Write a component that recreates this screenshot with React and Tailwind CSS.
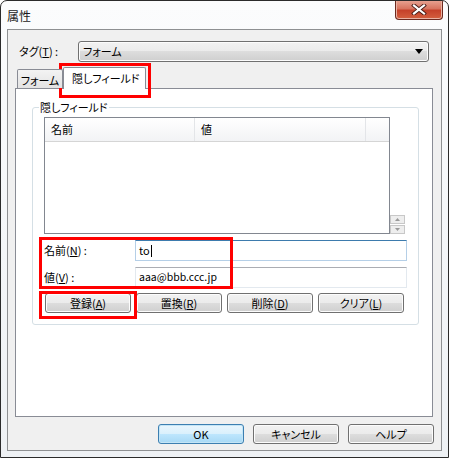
import React from 'react';

// win7 style push button
const Btn = ({ children, className = '', primary = false }) => (
	<div
		className={
			'flex items-center justify-center h-[20px] rounded-[3px] border whitespace-nowrap leading-none text-black ' +
			(primary
				? 'border-[#3c7fb1] bg-[linear-gradient(#eaf6fd_0%,#d9f0fc_50%,#bee6fd_50%,#a7d9f5_100%)] shadow-[inset_0_0_0_1px_#c4e5f6] '
				: 'border-[#707070] bg-[linear-gradient(#f2f2f2_0%,#ebebeb_50%,#dddddd_50%,#cfcfcf_100%)] shadow-[inset_0_0_0_1px_#fcfcfc] ') +
			className
		}
	>
		{children}
	</div>
);

const U = ({ children }) => <span className="underline underline-offset-1">{children}</span>;

const CloseButton = () => (
	<div className="ml-auto mr-[5px] -mt-[1px] flex h-[20px] w-[48px] items-center justify-center rounded-b-[4px] border border-t-0 border-[#6b2a20] bg-[linear-gradient(#e9a695_0%,#d77560_45%,#c5412a_55%,#d4603f_100%)] shadow-[inset_0_0_0_1px_#eab2a3]">
		<svg width="16" height="11" viewBox="0 0 16 11">
			<path d="M3 1.5 L13 9.5 M13 1.5 L3 9.5" stroke="#4a1c15" strokeWidth="4" strokeLinecap="square" />
			<path d="M3 1.5 L13 9.5 M13 1.5 L3 9.5" stroke="#ffffff" strokeWidth="2.2" strokeLinecap="square" />
		</svg>
	</div>
);

const App = () => {
	return (
		<div className="relative flex h-[458px] w-[449px] flex-col overflow-hidden rounded-t-[7px] border border-[#2b2b2b] bg-[linear-gradient(#fbfcfd,#eef1f4)] font-['Noto_Sans_CJK_JP',sans-serif] text-[11px] text-black [font-feature-settings:'palt']">
			{/* title bar */}
			<div className="flex h-[28px] shrink-0 items-start">
				<span className="pl-[6px] pt-[9px] text-[12px] leading-[12px] text-[#1a1a1a]">属性</span>
				<CloseButton />
			</div>

			{/* client area */}
			<div className="mx-[6px] mb-[6px] flex flex-1 flex-col border border-[#8e9092] bg-[#f0f0f0]">
				{/* tag row */}
				<div className="mt-[11px] flex h-[21px] items-center pl-[11px] pr-[12px]">
					<div className="w-[59px] whitespace-nowrap leading-none">
						タグ(<U>T</U>) :
					</div>
					<div className="flex h-[21px] flex-1 items-center rounded-[3px] border border-[#707070] bg-[linear-gradient(#f2f2f2_0%,#ebebeb_50%,#dddddd_50%,#cfcfcf_100%)] pl-[4px] pr-[5px] shadow-[inset_0_0_0_1px_#fcfcfc]">
						<span className="leading-none">フォーム</span>
						<svg className="ml-auto" width="8" height="5" viewBox="0 0 8 5">
							<path d="M0 0 H8 L4 5 Z" fill="#000" />
						</svg>
					</div>
				</div>

				{/* tabs */}
				<div className="relative z-10 ml-[7px] mt-[5px] flex h-[22px] items-end pl-[2px]">
					<div className="mb-[1px] flex h-[19px] w-[46px] items-center justify-center whitespace-nowrap rounded-t-[2px] border border-b-0 border-[#898c95] bg-[linear-gradient(#f3f3f3,#e3e3e3)] pt-[2px] leading-none">
						フォーム
					</div>
					<div className="flex h-[22px] w-[83px] items-center whitespace-nowrap rounded-t-[2px] border border-b-0 border-[#898c95] bg-white pl-[8px] leading-none">
						隠しフィールド
					</div>
				</div>

				{/* tab panel */}
				<div className="-mt-[1px] ml-[7px] mr-[8px] flex h-[329px] flex-col border border-[#898c95] bg-white">
					<div className="relative ml-[16px] mr-[13px] mt-[18px] h-[218px] rounded-[3px] border border-[#d5dfe5] pl-[11px] pt-[9px]">
						<span className="absolute -top-[8px] left-[6px] whitespace-nowrap bg-white px-[1px] leading-[14px]">隠しフィールド</span>

						{/* list view */}
						<div className="flex items-end">
							<div className="h-[117px] w-[346px] border border-[#828790] bg-white">
								<div className="flex h-[24px] border-b border-[#d5d5d5] bg-[linear-gradient(#ffffff,#f2f3f5)]">
									<div className="flex w-[150px] items-center border-r border-[#e3e5e8] pl-[6px] leading-none">名前</div>
									<div className="flex w-[171px] items-center border-r border-[#e3e5e8] pl-[6px] leading-none">値</div>
									<div className="flex-1" />
								</div>
							</div>
							<div className="flex w-[15px] flex-col gap-[1px]">
								<div className="flex h-[9px] items-center justify-center border border-[#c8c8c8] bg-[#eeeeee]">
									<svg width="5" height="3" viewBox="0 0 5 3"><path d="M0 3 L2.5 0 L5 3 Z" fill="#9a9a9a" /></svg>
								</div>
								<div className="flex h-[9px] items-center justify-center border border-[#c8c8c8] bg-[#eeeeee]">
									<svg width="5" height="3" viewBox="0 0 5 3"><path d="M0 0 L5 0 L2.5 3 Z" fill="#9a9a9a" /></svg>
								</div>
							</div>
						</div>

						{/* name / value */}
						<div className="mt-[6px] flex h-[21px] items-center">
							<div className="w-[91px] whitespace-nowrap leading-none">
								名前(<U>N</U>) :
							</div>
							<div className="flex h-[21px] w-[272px] items-center border border-[#b5cfe7] border-t-[#3d7bad] bg-white pl-[3px] leading-none">
								to
								<span className="ml-[1px] inline-block h-[12px] w-[1px] bg-black" />
							</div>
						</div>
						<div className="mt-[6px] flex h-[21px] items-center">
							<div className="w-[91px] whitespace-nowrap leading-none">
								値(<U>V</U>) :
							</div>
							<div className="flex h-[21px] w-[272px] items-center border border-[#e3e9ef] border-t-[#abadb3] bg-white pl-[3px] text-[10.5px] leading-none">
								aaa@bbb.ccc.jp
							</div>
						</div>

						{/* action buttons */}
						<div className="mt-[5px] flex gap-[5px] pl-[1px]">
							<Btn className="w-[86px]">
								登録(<U>A</U>)
							</Btn>
							<Btn className="w-[86px]">
								置換(<U>R</U>)
							</Btn>
							<Btn className="w-[86px]">
								削除(<U>D</U>)
							</Btn>
							<Btn className="w-[86px]">
								クリア(<U>L</U>)
							</Btn>
						</div>
					</div>
				</div>

				{/* dialog buttons */}
				<div className="mt-[7px] flex justify-end gap-[9px] pr-[7px]">
					<Btn primary className="w-[86px]">OK</Btn>
					<Btn className="w-[86px]">キャンセル</Btn>
					<Btn className="w-[86px]">ヘルプ</Btn>
				</div>
			</div>

			{/* red annotation boxes */}
			<div className="pointer-events-none absolute left-[58px] top-[62px] h-[35px] w-[92px] border-[3px] border-[#ff0000]" />
			<div className="pointer-events-none absolute left-[38px] top-[236px] h-[52px] w-[194px] border-[3px] border-[#ff0000]" />
			<div className="pointer-events-none absolute left-[38px] top-[290px] h-[28px] w-[98px] border-[3px] border-[#ff0000]" />
		</div>
	);
};

export default App;
